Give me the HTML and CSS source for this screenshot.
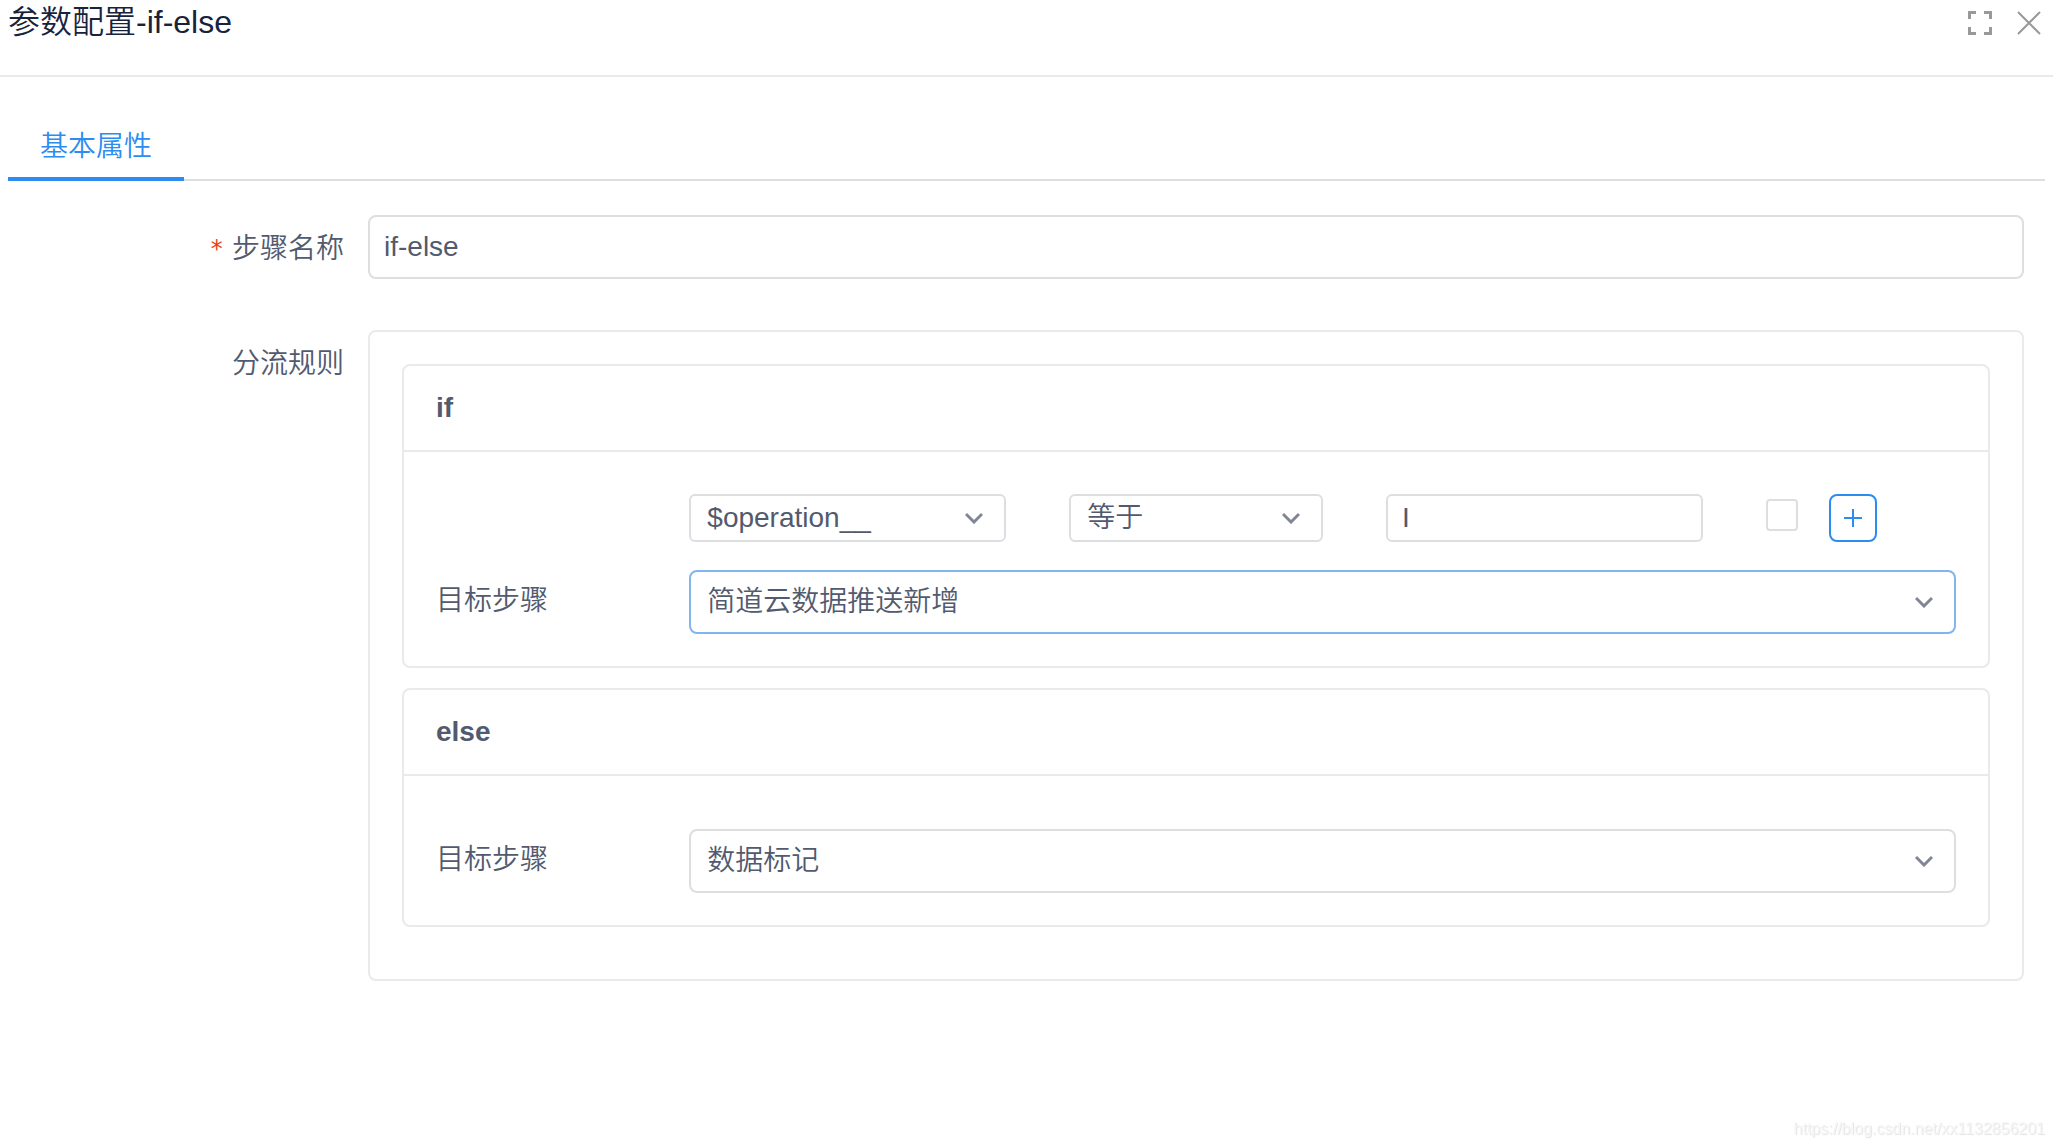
FILE: index.html
```html
<!DOCTYPE html>
<html lang="zh-CN">
<head>
    <meta charset="UTF-8">
    <meta name="viewport" content="width=device-width, initial-scale=1.0">
    <title>参数配置-if-else</title>
    <link rel="stylesheet" href="styles.css">
</head>
<body>
    <header class="modal-header">
        <h1 class="modal-title">参数配置-if-else</h1>
        <div class="modal-actions">
            <button type="button" class="icon-button" aria-label="全屏">
                <svg width="24" height="24" viewBox="0 0 24 24" fill="#999">
                    <path d="M0 0h8v3H3v5H0zM16 0h8v8h-3V3h-5zM0 16h3v5h5v3H0zM21 16h3v8h-8v-3h5z"/>
                </svg>
            </button>
            <button type="button" class="icon-button" aria-label="关闭">
                <svg width="24" height="24" viewBox="0 0 24 24" fill="none" stroke="#999" stroke-width="2">
                    <path d="M1 1l22 22M23 1L1 23"/>
                </svg>
            </button>
        </div>
    </header>

    <nav class="tabs">
        <a href="#basic" class="tab active">基本属性</a>
    </nav>

    <form class="config-form" id="basic">
        <label class="form-label required" for="stepName">步骤名称</label>
        <input type="text" class="control" id="stepName" value="if-else">

        <span class="form-label">分流规则</span>
        <div class="rules">
            <section class="card">
                <h2 class="card-title">if</h2>
                <div class="card-body">
                    <div class="grid-row">
                        <div class="select-box col-field">
                            <select class="control small" aria-label="字段">
                                <option>$operation__</option>
                            </select>
                            <svg class="arrow" width="18" height="12" viewBox="0 0 18 12"><path d="M1 2l8 8 8-8"/></svg>
                        </div>
                        <div class="select-box col-operator">
                            <select class="control small" aria-label="条件">
                                <option>等于</option>
                            </select>
                            <svg class="arrow" width="18" height="12" viewBox="0 0 18 12"><path d="M1 2l8 8 8-8"/></svg>
                        </div>
                        <input type="text" class="control small col-value" aria-label="值" value="I">
                        <input type="checkbox" class="check col-check" aria-label="选择">
                        <button type="button" class="add-button col-add" aria-label="添加条件">
                            <svg width="18" height="18" viewBox="0 0 18 18" fill="none" stroke="#2d8cf0" stroke-width="2">
                                <path d="M9 0v18M0 9h18"/>
                            </svg>
                        </button>
                    </div>
                    <div class="grid-row">
                        <label class="target-label" for="ifTarget">目标步骤</label>
                        <div class="select-box col-target">
                            <select class="control focused" id="ifTarget">
                                <option>简道云数据推送新增</option>
                            </select>
                            <svg class="arrow" width="18" height="12" viewBox="0 0 18 12"><path d="M1 2l8 8 8-8"/></svg>
                        </div>
                    </div>
                </div>
            </section>

            <section class="card">
                <h2 class="card-title">else</h2>
                <div class="card-body else-body">
                    <div class="grid-row">
                        <label class="target-label" for="elseTarget">目标步骤</label>
                        <div class="select-box col-target">
                            <select class="control" id="elseTarget">
                                <option>数据标记</option>
                            </select>
                            <svg class="arrow" width="18" height="12" viewBox="0 0 18 12"><path d="M1 2l8 8 8-8"/></svg>
                        </div>
                    </div>
                </div>
            </section>
        </div>
    </form>

    <div class="watermark">https://blog.csdn.net/xx1132856201</div>
</body>
</html>
```

FILE: styles.css
```css
* {
    box-sizing: border-box;
}

body {
    margin: 0;
    background-color: #fff;
    color: #515a6e;
    font-family: "Liberation Sans", "Noto Sans CJK SC", sans-serif;
    font-size: 28px;
    font-weight: 350;
    line-height: 44px;
}

/* Header */
.modal-header {
    display: flex;
    justify-content: space-between;
    align-items: flex-start;
    height: 77px;
    padding: 0 12px 0 8px;
    border-bottom: 2px solid #e8eaec;
}

.modal-title {
    margin: 0;
    color: #17233d;
    font-size: 32px;
    font-weight: 350;
    line-height: 44px;
}

.modal-actions {
    display: flex;
    gap: 25px;
    padding-top: 11px;
}

.icon-button {
    display: flex;
    padding: 0;
    border: none;
    background: none;
    cursor: pointer;
}

/* Tabs */
.tabs {
    display: flex;
    margin: 36px 8px 0;
    box-shadow: inset 0 -2px 0 #dcdee2;
}

.tab {
    padding: 12px 32px 8px;
    border-bottom: 4px solid transparent;
    color: #515a6e;
    text-decoration: none;
}

.tab.active {
    border-bottom-color: #2d8cf0;
    color: #2d8cf0;
}

/* Form */
.config-form {
    display: grid;
    grid-template-columns: 344px 1fr;
    align-items: start;
    column-gap: 24px;
    row-gap: 47px;
    padding: 34px 29px 0 0;
}

.form-label {
    display: flex;
    justify-content: flex-end;
    align-items: center;
    line-height: 68px;
}

.form-label.required::before {
    content: "*";
    margin-right: 8px;
    color: #ed4014;
    font-family: "DejaVu Sans Mono", monospace;
    font-size: 24px;
}

.control {
    width: 100%;
    height: 64px;
    margin: 0;
    padding: 0 14px;
    border: 2px solid #dcdee2;
    border-radius: 8px;
    background-color: #fff;
    color: #515a6e;
    font: inherit;
    outline: none;
}

.control.small {
    height: 48px;
    border-radius: 6px;
}

.control.focused {
    border-color: #80b5f0;
}

.select-box {
    display: grid;
    align-items: center;
}

.select-box .control {
    grid-area: 1 / 1;
    padding: 0 48px 0 16px;
    appearance: none;
}

.arrow {
    grid-area: 1 / 1;
    justify-self: end;
    margin-right: 23px;
    fill: none;
    stroke: #808695;
    stroke-width: 3;
    pointer-events: none;
}

/* Rules */
.rules {
    padding: 32px 32px 52px;
    border: 2px solid #e8eaec;
    border-radius: 8px;
}

.card {
    border: 2px solid #e8eaec;
    border-radius: 8px;
}

.card + .card {
    margin-top: 20px;
}

.card-title {
    margin: 0;
    padding: 20px 32px;
    border-bottom: 2px solid #e8eaec;
    font-size: 28px;
    font-weight: bold;
    line-height: 44px;
}

.card-body {
    display: grid;
    gap: 28px;
    padding: 42px 32px 32px;
}

.card-body.else-body {
    padding-top: 53px;
}

.grid-row {
    display: grid;
    grid-template-columns: repeat(24, minmax(0, 1fr));
    align-items: start;
}

.col-field {
    grid-column: 5 / span 5;
}

.col-operator {
    grid-column: 11 / span 4;
}

.col-value {
    grid-column: 16 / span 5;
}

.col-check {
    grid-column: 22;
}

.col-add {
    grid-column: 23;
}

.col-target {
    grid-column: 5 / -1;
}

.target-label {
    grid-column: 1 / span 4;
    line-height: 62px;
}

.check {
    width: 32px;
    height: 32px;
    margin: 5px 0 0;
    border: 2px solid #dcdee2;
    border-radius: 4px;
    background-color: #fff;
    appearance: none;
}

.add-button {
    display: flex;
    justify-content: center;
    align-items: center;
    width: 48px;
    height: 48px;
    padding: 0;
    border: 2px solid #2d8cf0;
    border-radius: 8px;
    background-color: #fff;
    cursor: pointer;
}

.watermark {
    position: fixed;
    right: 8px;
    bottom: 8px;
    color: #f6f6f6;
    font-size: 16px;
    line-height: 20px;
    text-shadow: 1px 1px 1px #e2e2e2;
}
```
